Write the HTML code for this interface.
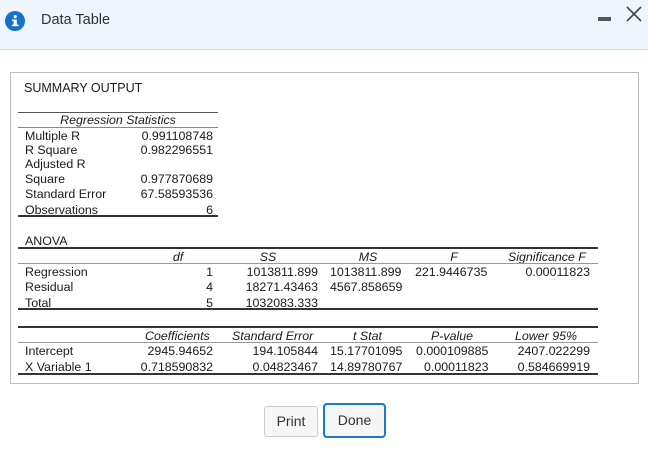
<!DOCTYPE html>
<html><head><meta charset="utf-8"><style>
*{margin:0;padding:0;box-sizing:border-box}
body{width:648px;height:451px;background:#fff;position:relative;overflow:hidden;font-family:"Liberation Sans",Arial,sans-serif;color:#222}
.hdr{position:absolute;left:0;top:0;width:648px;height:50px;background:#eff5fd;border-bottom:1px solid #c8dcf0}
.box{position:absolute;left:10px;top:72px;width:629px;height:312px;border:1px solid #bcbcbc}
.t{position:absolute;font-size:12.4px;line-height:14px;white-space:nowrap;color:#1a1a1a}
.r{text-align:right}
.c{text-align:center}
.i{font-style:italic}
.l{position:absolute;height:1px;background:#555}
.L{position:absolute;height:2px;background:#333}
.btn{position:absolute;font-size:14px;color:#333;background:#f6f6f6;border:1px solid #ccc;border-radius:3px;text-align:center}
</style></head><body>
<div class="hdr">
<svg style="position:absolute;left:5px;top:11px" width="20" height="20" viewBox="0 0 20 20"><circle cx="10" cy="10" r="10" fill="#1572c9"/><rect x="8.6" y="8.5" width="3.2" height="6.5" fill="#fff"/><rect x="7" y="8.5" width="3" height="1.6" fill="#fff"/><rect x="7" y="13.6" width="6.6" height="1.6" fill="#fff"/><circle cx="10.2" cy="5.6" r="1.6" fill="#fff"/></svg>
<div style="position:absolute;left:41px;top:12px;font-size:14.5px;color:#333">Data Table</div>
<div style="position:absolute;left:598px;top:17px;width:13px;height:4px;background:#555"></div>
<svg style="position:absolute;left:626px;top:6px" width="16" height="16" viewBox="0 0 16 16"><path d="M1 1L15 15M15 1L1 15" stroke="#444" stroke-width="1.6"/></svg>
</div>
<div class="box"></div>
<div class="t" style="left:24px;top:81px;font-size:12.5px">SUMMARY OUTPUT</div>

<div class="l" style="left:18px;top:112px;width:200px"></div>
<div class="t i c" style="left:18px;top:113px;width:200px">Regression Statistics</div>
<div class="l" style="left:18px;top:127px;width:200px;background:#888"></div>
<div class="t" style="left:25px;top:129px">Multiple R</div><div class="t r" style="left:110px;top:129px;width:103px">0.991108748</div>
<div class="t" style="left:25px;top:143px">R Square</div><div class="t r" style="left:110px;top:143px;width:103px">0.982296551</div>
<div class="t" style="left:25px;top:157px">Adjusted R</div>
<div class="t" style="left:25px;top:172px">Square</div><div class="t r" style="left:110px;top:172px;width:103px">0.977870689</div>
<div class="t" style="left:25px;top:187px">Standard Error</div><div class="t r" style="left:110px;top:187px;width:103px">67.58593536</div>
<div class="t" style="left:25px;top:203px">Observations</div><div class="t r" style="left:110px;top:203px;width:103px">6</div>
<div class="L" style="left:18px;top:215px;width:200px"></div>

<div class="t" style="left:25px;top:234px">ANOVA</div>
<div class="L" style="left:18px;top:247px;width:580px"></div>
<div class="t i c" style="left:150px;top:250px;width:56px">df</div>
<div class="t i c" style="left:240px;top:250px;width:56px">SS</div>
<div class="t i c" style="left:340px;top:250px;width:56px">MS</div>
<div class="t i c" style="left:426px;top:250px;width:56px">F</div>
<div class="t i" style="left:508px;top:250px">Significance F</div>
<div class="l" style="left:18px;top:263px;width:580px;background:#999"></div>
<div class="t" style="left:25px;top:265px">Regression</div><div class="t r" style="left:160px;top:265px;width:53px">1</div>
<div class="t r" style="left:220px;top:265px;width:98px">1013811.899</div><div class="t" style="left:330px;top:265px">1013811.899</div><div class="t" style="left:415px;top:265px">221.9446735</div><div class="t r" style="left:490px;top:265px;width:100px">0.00011823</div>
<div class="t" style="left:25px;top:280px">Residual</div><div class="t r" style="left:160px;top:280px;width:53px">4</div>
<div class="t r" style="left:220px;top:280px;width:98px">18271.43463</div><div class="t" style="left:330px;top:280px">4567.858659</div>
<div class="t" style="left:25px;top:296px">Total</div><div class="t r" style="left:160px;top:296px;width:53px">5</div>
<div class="t r" style="left:220px;top:296px;width:98px">1032083.333</div>
<div class="L" style="left:18px;top:308px;width:580px"></div>

<div class="L" style="left:18px;top:326px;width:580px"></div>
<div class="t i" style="left:145px;top:329px">Coefficients</div>
<div class="t i" style="left:232px;top:329px">Standard Error</div>
<div class="t i" style="left:353px;top:329px">t Stat</div>
<div class="t i" style="left:431px;top:329px">P-value</div>
<div class="t i" style="left:515px;top:329px">Lower 95%</div>
<div class="l" style="left:18px;top:342px;width:580px;background:#999"></div>
<div class="t" style="left:25px;top:344px">Intercept</div><div class="t r" style="left:110px;top:344px;width:103px">2945.94652</div>
<div class="t r" style="left:220px;top:344px;width:98px">194.105844</div><div class="t" style="left:330px;top:344px">15.17701095</div><div class="t" style="left:416px;top:344px">0.000109885</div><div class="t r" style="left:490px;top:344px;width:100px">2407.022299</div>
<div class="t" style="left:25px;top:360px">X Variable 1</div><div class="t r" style="left:110px;top:360px;width:103px">0.718590832</div>
<div class="t r" style="left:220px;top:360px;width:98px">0.04823467</div><div class="t" style="left:330px;top:360px">14.89780767</div><div class="t" style="left:424px;top:360px">0.00011823</div><div class="t r" style="left:490px;top:360px;width:100px">0.584669919</div>
<div class="L" style="left:18px;top:373px;width:580px"></div>

<div class="btn" style="left:264px;top:406px;width:54px;height:31px;line-height:29px">Print</div>
<div class="btn" style="left:323px;top:403px;width:63px;height:35px;line-height:31px;border:2px solid #1a78d2;border-radius:4px">Done</div>
</body></html>
